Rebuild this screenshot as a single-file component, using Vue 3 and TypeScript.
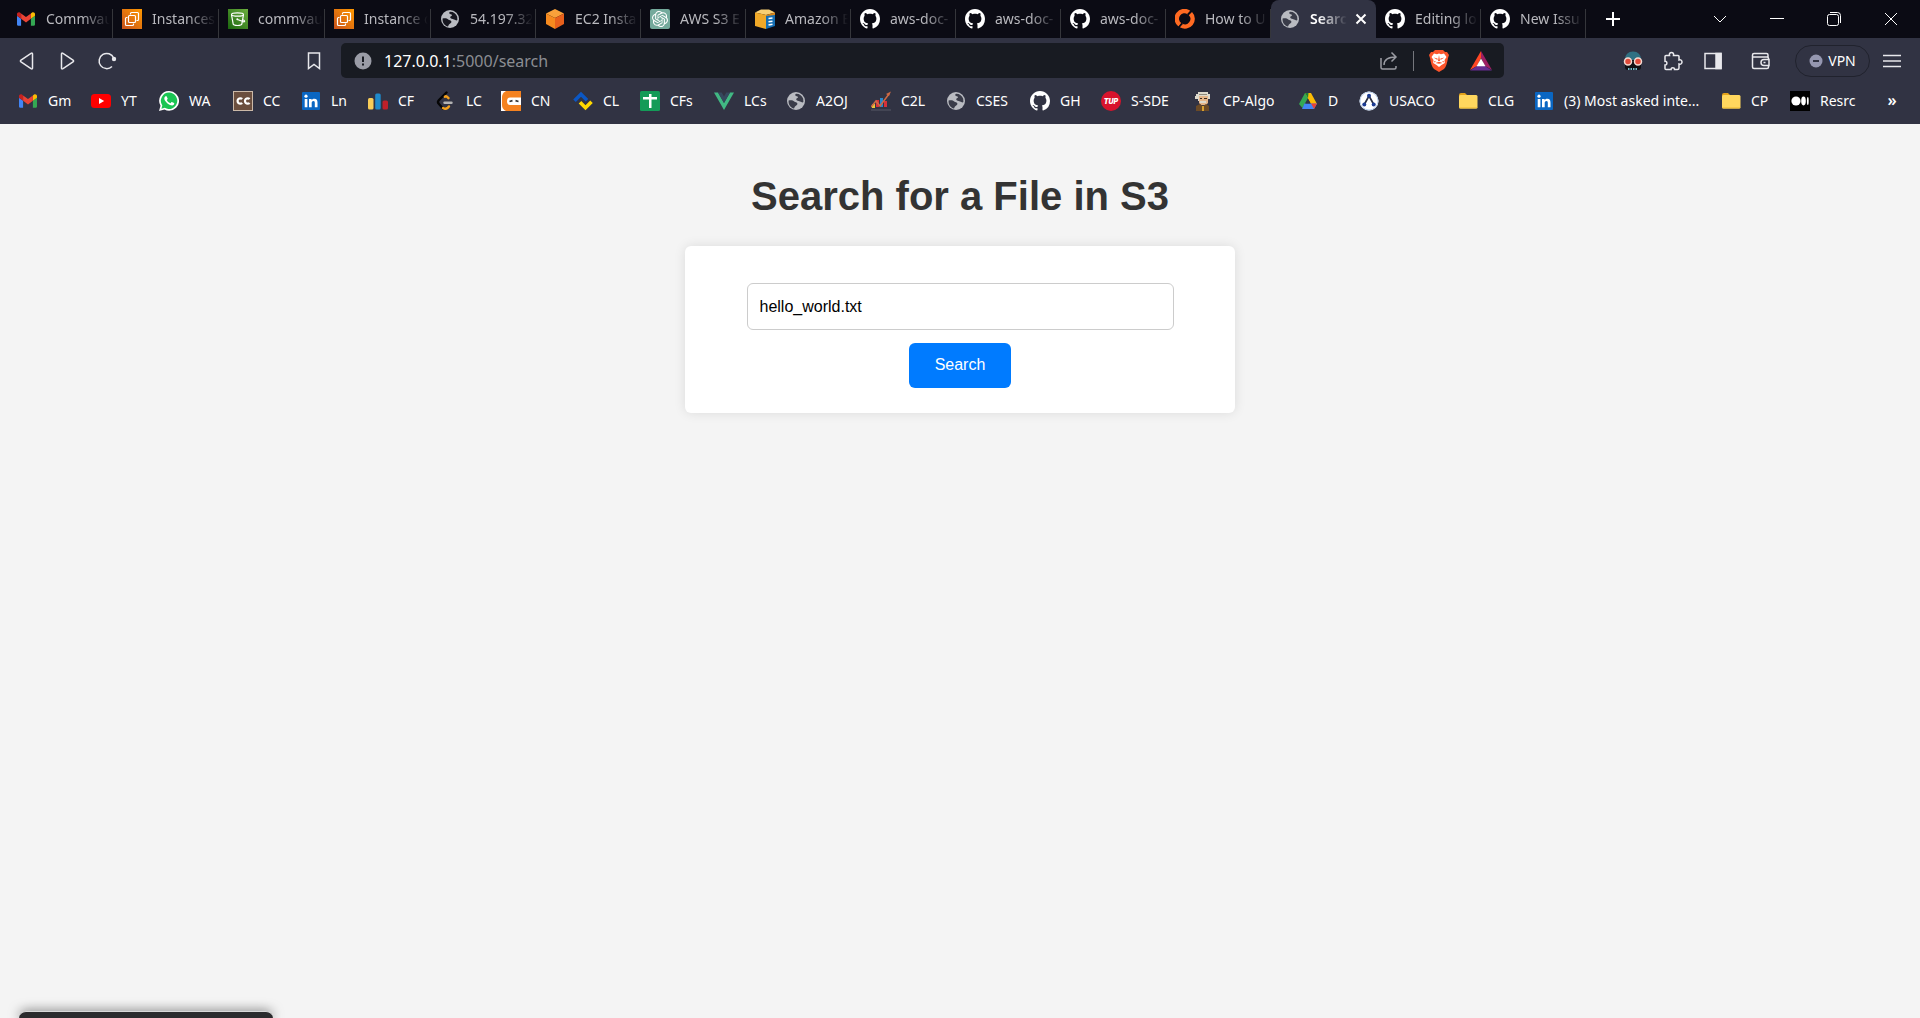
<script setup lang="ts">
import { ref } from 'vue'

interface Tab {
  title: string
  icon: string
  active?: boolean
}

interface Bookmark {
  label: string
  icon: string
  width: number
}

const fileName = ref('hello_world.txt')

const octocat =
  '<path fill="#fff" transform="scale(1.25)" d="M8 0C3.58 0 0 3.58 0 8c0 3.54 2.29 6.53 5.47 7.59.4.07.55-.17.55-.38 0-.19-.01-.82-.01-1.49-2.01.37-2.53-.49-2.69-.94-.09-.23-.48-.94-.82-1.13-.28-.15-.68-.52-.01-.53.63-.01 1.08.58 1.23.82.72 1.21 1.87.87 2.33.66.07-.52.28-.87.51-1.07-1.78-.2-3.64-.89-3.64-3.95 0-.87.31-1.59.82-2.15-.08-.2-.36-1.02.08-2.12 0 0 .67-.21 2.2.82.64-.18 1.32-.27 2-.27.68 0 1.36.09 2 .27 1.53-1.04 2.2-.82 2.2-.82.44 1.1.16 1.92.08 2.12.51.56.82 1.27.82 2.15 0 3.07-1.87 3.75-3.65 3.95.29.25.54.73.54 1.48 0 1.07-.01 1.93-.01 2.2 0 .21.15.46.55.38A8.013 8.013 0 0016 8c0-4.42-3.58-8-8-8z"/>'

const globe =
  '<circle cx="10" cy="10" r="9" fill="#b9bbc1"/><path class="sea" d="M2.600 9.500C5 8.800 7.200 9.400 8.200 10.400 9.200 11.400 11 11 11.400 12.400 11.800 14 9.600 14.400 8.800 15.800L8 17.600C4.600 16.800 2.200 13.600 2.600 9.500ZM10.400 2.800C13.600 2.800 16.200 4.800 17.200 7.800L17.400 11C16.200 12 15.400 10.800 14 10.400 12.400 10 10.600 10 10.200 8.600 9.800 7.400 12.200 7.200 12 6 11.800 5 9.400 5.200 9.200 4.200 9.100 3.400 9.800 2.800 10.400 2.800Z"/>'

const folder =
  '<path fill="#e3a21a" d="M1 4a2 2 0 0 1 2-2h4l2 2h8a2 2 0 0 1 2 2v3H1z"/><rect x="1" y="4" width="18.500" height="13.500" rx="1.500" fill="#ffd75e"/><path fill="#f6c744" d="M1 16h18.500a1.500 1.500 0 0 1-1.500 1.500H2.500A1.500 1.500 0 0 1 1 16z"/>'

const linkedin =
  '<rect x="1" y="1" width="18" height="18" rx="1" fill="#0a66c2"/><path fill="#fff" d="M3.700 8h2.700v8.300H3.700zM8 8h2.600v1.200c.5-.8 1.400-1.400 2.700-1.400 2.500 0 3.200 1.600 3.200 3.900v4.600h-2.700v-4.200c0-1.100-.2-2-1.400-2-1.300 0-1.700 1-1.700 2.100v4.100H8z"/><circle cx="5" cy="5.200" r="1.600" fill="#fff"/>'

const ec2 =
  '<defs><linearGradient id="ec2g" x1="0" y1="1" x2="1" y2="0"><stop offset="0" stop-color="#c8511b"/><stop offset="1" stop-color="#f90"/></linearGradient></defs><rect width="20" height="20" fill="url(#ec2g)"/><g fill="none" stroke="#fff" stroke-width="1.200"><path d="M8.500 5.500V4.500q0-1 1-1h6q1 0 1 1v6q0 1-1 1h-1"/><rect x="6.500" y="6.500" width="7" height="7" rx="1"/><path d="M5.500 8.500h-1q-1 0-1 1v6q0 1 1 1h6q1 0 1-1v-1"/></g>'

const icons: Record<string, string> = {
  github: octocat,
  globe,
  folder,
  linkedin,
  ec2,
  gmail:
    '<g transform="translate(1 3.200) scale(.2045) translate(-52 -42)"><path fill="#4285f4" d="M58 108h14V74L52 59v43c0 3.320 2.690 6 6 6"/><path fill="#34a853" d="M120 108h14c3.320 0 6-2.690 6-6V59l-20 15"/><path fill="#fbbc04" d="M120 48v26l20-15v-8c0-7.420-8.470-11.650-14.400-7.200"/><path fill="#ea4335" d="M72 74V48l24 18 24-18v26L96 92"/><path fill="#c5221f" d="M52 51v8l20 15V48l-5.600-4.200c-5.940-4.450-14.400-.22-14.400 7.200"/></g>',
  s3:
    '<defs><linearGradient id="s3g" x1="0" y1="1" x2="1" y2="0"><stop offset="0" stop-color="#1b660f"/><stop offset="1" stop-color="#6cae3e"/></linearGradient></defs><rect width="20" height="20" fill="url(#s3g)"/><g fill="none" stroke="#fff" stroke-width="1.200"><ellipse cx="9.500" cy="5.500" rx="6" ry="1.700"/><path d="M3.500 5.700l1.700 9.500c.3 1.700 8.300 1.700 8.600 0l1.700-9.500M9.500 10.500l6 2.300c1.500.4 1.500-1 .1-1.900l-1-.7"/></g><circle cx="9.300" cy="10.300" r="1" fill="#fff"/>',
  cube:
    '<path fill="#f9a13a" d="M10 0l9 4.500L10 9 1 4.500z"/><path fill="#f68a1f" d="M1 4.500L10 9v11l-9-5z"/><path fill="#e8601c" d="M19 4.500L10 9v11l9-5z"/>',
  openai:
    '<rect width="20" height="20" rx="2" fill="#74aa9c"/><path fill="#fff" transform="translate(2 2) scale(.667)" d="M22.282 9.821a5.985 5.985 0 0 0-.516-4.911 6.046 6.046 0 0 0-6.510-2.900A6.065 6.065 0 0 0 4.981 4.182a5.985 5.985 0 0 0-3.998 2.900 6.046 6.046 0 0 0 .743 7.097 5.980 5.980 0 0 0 .511 4.911 6.051 6.051 0 0 0 6.515 2.900A5.985 5.985 0 0 0 13.260 24a6.056 6.056 0 0 0 5.772-4.206 5.989 5.989 0 0 0 3.998-2.900 6.056 6.056 0 0 0-.748-7.073zm-9.022 12.608a4.476 4.476 0 0 1-2.876-1.041l.142-.080 4.778-2.758a.795.795 0 0 0 .393-.681v-6.737l2.020 1.169a.071.071 0 0 1 .038.052v5.583a4.504 4.504 0 0 1-4.495 4.494zm-9.661-4.125a4.471 4.471 0 0 1-.535-3.014l.142.085 4.783 2.758a.771.771 0 0 0 .781 0l5.843-3.369v2.332a.080.080 0 0 1-.033.062L9.740 19.950a4.499 4.499 0 0 1-6.141-1.646zM2.341 7.896a4.485 4.485 0 0 1 2.366-1.973V11.600a.766.766 0 0 0 .388.677l5.814 3.354-2.020 1.169a.076.076 0 0 1-.071 0l-4.830-2.787A4.504 4.504 0 0 1 2.341 7.872zm16.596 3.856L13.104 8.364 15.119 7.200a.076.076 0 0 1 .071 0l4.830 2.791a4.494 4.494 0 0 1-.677 8.104v-5.677a.790.790 0 0 0-.407-.667zm2.011-3.023l-.142-.085-4.774-2.782a.776.776 0 0 0-.785 0L9.409 9.230V6.897a.066.066 0 0 1 .028-.062l4.830-2.787a4.499 4.499 0 0 1 6.680 4.660zM8.307 12.863l-2.020-1.164a.080.080 0 0 1-.038-.057V6.074a4.499 4.499 0 0 1 7.376-3.454l-.142.081L8.704 5.459a.795.795 0 0 0-.393.681zm1.098-2.365l2.602-1.500 2.607 1.500v2.999l-2.597 1.500-2.607-1.500Z"/>',
  awsbox:
    '<path fill="#f9cf73" d="M0 3.500L6 .5h8l6 3-9 2.500z"/><path fill="#f0a828" d="M0 3.500L11 6v14L0 17z"/><path fill="#d9861a" d="M11 6l9-2.500v5H11z"/><path fill="#146eb4" d="M11 7l9-1v11l-9 3z"/><path stroke="#fff" stroke-width="1.600" d="M13.500 9.500l4-.5M13.500 12.700l4-.5M13.500 16l4-.8"/>',
  ring:
    '<path fill="none" stroke="#ff6a22" stroke-width="4.500" d="M4.800 15.800A7.600 7.600 0 0 1 14 3.600M15.400 4.600A7.600 7.600 0 0 1 6 16.400"/><path stroke="#0b0b14" stroke-width="1.300" d="M12.500 5.500l4-4M3.500 18.500l4-4"/>',
  youtube:
    '<rect y="3" width="20" height="14" rx="3.500" fill="#f00"/><path fill="#fff" d="M8 7l5.200 3L8 13z"/>',
  whatsapp:
    '<path fill="#fff" d="M10.200 0a9.800 9.800 0 0 1 0 19.700c-1.700 0-3.300-.4-4.700-1.200L0 20l1.500-5.300A9.800 9.800 0 0 1 10.200 0z"/><path fill="#1bc553" d="M10.200 1.600a8.200 8.200 0 1 1-4.400 15.200l-3.400.9.900-3.300A8.200 8.200 0 0 1 10.200 1.600z"/><path fill="#fff" transform="translate(.4 0) scale(.82)" d="M17.472 14.382c-.297-.149-1.758-.867-2.030-.967-.273-.099-.471-.148-.670.150-.197.297-.767.966-.940 1.164-.173.199-.347.223-.644.075-.297-.150-1.255-.463-2.390-1.475-.883-.788-1.480-1.761-1.653-2.059-.173-.297-.018-.458.130-.606.134-.133.298-.347.446-.520.149-.174.198-.298.298-.497.099-.198.050-.371-.025-.520-.075-.149-.669-1.612-.916-2.207-.242-.579-.487-.500-.669-.510-.173-.008-.371-.010-.570-.010-.198 0-.520.074-.792.372-.272.297-1.040 1.016-1.040 2.479 0 1.462 1.065 2.875 1.213 3.074.149.198 2.096 3.200 5.077 4.487.709.306 1.262.489 1.694.625.712.227 1.360.195 1.871.118.571-.085 1.758-.719 2.006-1.413.248-.694.248-1.289.173-1.413-.074-.124-.272-.198-.570-.347z"/>',
  codechef:
    '<rect x=".5" y=".5" width="19" height="19" fill="#6b4f3f" stroke="#cbb9a8"/><path fill="none" stroke="#fff" stroke-width="2.200" d="M9.200 8.100A2.700 2.700 0 1 0 9.200 11.900M16.600 8.100A2.700 2.700 0 1 0 16.600 11.900"/>',
  codeforces:
    '<rect y="7" width="5.500" height="11.500" rx="1.500" fill="#f8cd58"/><rect x="7.200" y="2.500" width="5.500" height="16" rx="1.500" fill="#1f8acb"/><rect x="14.500" y="9.500" width="5.500" height="9" rx="1.500" fill="#c0202a"/>',
  leetcode:
    '<g fill="none" stroke-linecap="round" stroke-width="2.400"><path stroke="#050505" d="M10.500 1.500L3 9q-2 2 0 4l4 4.500"/><path stroke="#f5a11c" d="M12.500 7.200l-1.600-1.500q-1-.8-2 0M7 17q2.500 1.500 4.500 0l1.500-1.600"/><path stroke="#b3b3b3" d="M8.500 11.700h7"/></g>',
  codingninjas:
    '<rect width="20" height="20" fill="#fff"/><path fill="#f58220" d="M5 0h15v20H5Q1 18 1 14V6Q1 2 5 0z"/><path fill="#fff" d="M20 6.500V14H9q-3 0-3-3.700t3-3.800z"/><path stroke="#333" stroke-width="1.800" d="M8.500 10.500l3-.8M17.500 10.500l-3-.8"/>',
  codolio:
    '<path fill="none" stroke="#0b57c4" stroke-width="3.600" d="M1.500 9.800L8 3.200l6 6"/><path fill="none" stroke="#ffd800" stroke-width="3.600" d="M7 11.200l5.500 5.600 6-6"/>',
  sheets:
    '<rect width="20" height="20" rx="1.500" fill="#149b58"/><path fill="#fff" d="M3 6h6V3h2.500v3H17v2.500h-5.500V17H9V8.500H3z"/>',
  vue:
    '<path fill="#41b883" d="M0 1.500h4l6 10.500 6-10.500h4L10 19z"/><path fill="#35495e" d="M4 1.500h3.700L10 5.500l2.300-4H16L10 12z"/>',
  chart:
    '<path fill="#e8c53a" d="M1 13h3v4H1z"/><path fill="#2a86c9" d="M9 7h3v9H9z"/><path fill="#d7303a" d="M5 9h3v7H5zM13 10h3v6h-3z"/><path fill="none" stroke="#cf6a45" stroke-width="1.500" d="M0 16l5-6 4 5 9-12"/><path fill="#cf6a45" d="M20 .5l-5 2.500 3 2z"/><path stroke="#565866" d="M0 19h20"/>',
  tup:
    '<circle cx="10" cy="10" r="10" fill="#d8132c"/><text x="10" y="12.500" fill="#fff" text-anchor="middle" font-family="Inter, sans-serif" font-weight="900" font-style="italic" font-size="7">TUP</text>',
  algo:
    '<path fill="#ddd9cc" d="M3 3h2V1h10v2h2v5h-2v2H5V8H2V5h1z"/><path fill="#8f8a7c" d="M6 3h8v1H6z"/><path fill="#e5b68a" d="M6 5h9v7l-2 2H8l-2-2z"/><path fill="#3b2a1e" d="M7 7h2v1H7zM11 7h3v1h-3z"/><path fill="#ddd9cc" d="M7 10h6v2H7z"/><path fill="#6b4a26" d="M3 15l4-2 3 2 3-2 3 2v5H3z"/><path fill="#d8a02f" d="M9 15h2v5H9z"/>',
  drive:
    '<path fill="#34a853" d="M7 2L1 13l3.500 4L10 7z"/><path fill="#fbbc04" d="M7 2h6l6 11h-6z"/><path fill="#4285f4" d="M6.500 12.500H19L16 18H4z"/><path fill="#188038" d="M7 2h3.500L10 7z"/><path fill="#ea4335" d="M13 12.500h6L16 18z"/><path fill="#313343" d="M10 8l2.500 4.500h-5z"/>',
  usaco:
    '<circle cx="10" cy="10" r="9.500" fill="#fff"/><circle cx="10" cy="10" r="9" fill="none" stroke="#b9cdea"/><path fill="none" stroke="#2a2f45" stroke-width="1.700" d="M10 5L5.500 13M10 5l4.500 8"/><g fill="#1b3b94"><circle cx="10" cy="4.800" r="2"/><circle cx="5.300" cy="13.500" r="2"/><circle cx="14.700" cy="13.500" r="2"/></g>',
  medium:
    '<rect width="20" height="20" fill="#000"/><circle cx="6" cy="10" r="4.600" fill="#fff"/><ellipse cx="13.500" cy="10" rx="2.300" ry="4.400" fill="#fff"/><ellipse cx="17.800" cy="10" rx=".9" ry="4" fill="#fff"/>',
}

const tabs: Tab[] = [
  { title: 'Commvau', icon: 'gmail' },
  { title: 'Instances', icon: 'ec2' },
  { title: 'commvau', icon: 's3' },
  { title: 'Instance d', icon: 'ec2' },
  { title: '54.197.32', icon: 'globe' },
  { title: 'EC2 Insta', icon: 'cube' },
  { title: 'AWS S3 E', icon: 'openai' },
  { title: 'Amazon E', icon: 'awsbox' },
  { title: 'aws-doc-', icon: 'github' },
  { title: 'aws-doc-', icon: 'github' },
  { title: 'aws-doc-', icon: 'github' },
  { title: 'How to U', icon: 'ring' },
  { title: 'Searc', icon: 'globe', active: true },
  { title: 'Editing lo', icon: 'github' },
  { title: 'New Issu', icon: 'github' },
]

const bookmarks: Bookmark[] = [
  { label: 'Gm', icon: 'gmail', width: 73 },
  { label: 'YT', icon: 'youtube', width: 68 },
  { label: 'WA', icon: 'whatsapp', width: 74 },
  { label: 'CC', icon: 'codechef', width: 68 },
  { label: 'Ln', icon: 'linkedin', width: 67 },
  { label: 'CF', icon: 'codeforces', width: 68 },
  { label: 'LC', icon: 'leetcode', width: 65 },
  { label: 'CN', icon: 'codingninjas', width: 72 },
  { label: 'CL', icon: 'codolio', width: 67 },
  { label: 'CFs', icon: 'sheets', width: 74 },
  { label: 'LCs', icon: 'vue', width: 72 },
  { label: 'A2OJ', icon: 'globe', width: 85 },
  { label: 'C2L', icon: 'chart', width: 75 },
  { label: 'CSES', icon: 'globe', width: 84 },
  { label: 'GH', icon: 'github', width: 71 },
  { label: 'S-SDE', icon: 'tup', width: 92 },
  { label: 'CP-Algo', icon: 'algo', width: 105 },
  { label: 'D', icon: 'drive', width: 61 },
  { label: 'USACO', icon: 'usaco', width: 99 },
  { label: 'CLG', icon: 'folder', width: 76 },
  { label: '(3) Most asked inte...', icon: 'linkedin', width: 187 },
  { label: 'CP', icon: 'folder', width: 69 },
  { label: 'Resrc', icon: 'medium', width: 86 },
]
</script>

<template>
  <div class="window">
    <header class="chrome">
      <div class="tab-strip">
        <div class="tabs">
          <div v-for="(tab, i) in tabs" :key="i" class="tab" :class="{ active: tab.active }">
            <svg class="icon" viewBox="0 0 20 20" aria-hidden="true" v-html="icons[tab.icon]"></svg>
            <span class="tab-title">{{ tab.title }}</span>
            <button v-if="tab.active" class="tab-close" aria-label="Close tab">
              <svg width="12" height="12" viewBox="0 0 12 12"><path d="M1.500 1.500l9 9m0-9l-9 9" stroke="#fff" stroke-width="2" /></svg>
            </button>
          </div>
        </div>
        <button class="new-tab" aria-label="New tab">
          <svg width="16" height="16" viewBox="0 0 16 16"><path d="M8 1v14M1 8h14" stroke="#fff" stroke-width="2" /></svg>
        </button>
        <div class="window-controls">
          <button aria-label="Search tabs">
            <svg width="14" height="14" viewBox="0 0 14 14"><path d="M1 4l6 6 6-6" /></svg>
          </button>
          <button aria-label="Minimise">
            <svg width="14" height="14" viewBox="0 0 14 14"><path d="M0 6.500h14" /></svg>
          </button>
          <button aria-label="Restore">
            <svg width="14" height="14" viewBox="0 0 14 14"><rect x=".5" y="2.500" width="11" height="11" rx="2" /><path d="M3 .5h7.500a3 3 0 0 1 3 3V11" /></svg>
          </button>
          <button aria-label="Close">
            <svg width="14" height="14" viewBox="0 0 14 14"><path d="M1 1l12 12M13 1L1 13" /></svg>
          </button>
        </div>
      </div>

      <div class="toolbar">
        <div class="nav">
          <button aria-label="Back">
            <svg width="20" height="20" viewBox="0 0 20 20"><path d="M15.500 3v14q0 1.500-1.500.6L4 11q-1.200-1 0-2l10-6.600q1.500-.9 1.500.6z" /></svg>
          </button>
          <button aria-label="Forward">
            <svg width="20" height="20" viewBox="0 0 20 20"><path d="M4.500 3v14q0 1.500 1.500.6L16 11q1.200-1 0-2L6 2.400q-1.500-.9-1.500.6z" /></svg>
          </button>
          <button aria-label="Reload">
            <svg width="20" height="20" viewBox="0 0 20 20"><path d="M15 15.500A7.600 7.600 0 1 1 16.700 7" /><circle cx="17" cy="8" r="2.200" fill="#e8e8ec" stroke="none" /></svg>
          </button>
          <button class="save-page" aria-label="Bookmark this page">
            <svg width="20" height="20" viewBox="0 0 20 20"><path d="M4.500 2h11v15.500l-5.500-4-5.500 4z" /></svg>
          </button>
        </div>

        <div class="omnibox">
          <svg class="info" width="18" height="18" viewBox="0 0 18 18"><circle cx="9" cy="9" r="8.500" fill="#9a9ca6" /><path d="M9 4.500v5.500M9 11.500v2" stroke="#181b22" stroke-width="2" /></svg>
          <span class="url"><span class="host">127.0.0.1</span>:5000/search</span>
          <button class="share" aria-label="Share">
            <svg width="20" height="20" viewBox="0 0 20 20"><path d="M2 7v9.500a1.500 1.500 0 0 0 1.500 1.500h12a1.500 1.500 0 0 0 1.500-1.500V15M5 14c0-5 4-8 12-8M12.500 1.500L17 6l-4.500 4.500" /></svg>
          </button>
          <span class="divider"></span>
          <button aria-label="Brave Shields">
            <svg width="22" height="24" viewBox="0 0 22 24"><path fill="#fb542b" d="M7 1h8l2 2h2l2 3-1 3c-.8 5-2 9-4 11l-5 3-5-3c-2-2-3.200-6-4-11L1 6l2-3h2z" /><path fill="#fff" d="M6 4.500l3 .7 2-.6 2 .6 3-.7 2.500 3.500-2 3 .3 3-3.300 2-2.500 2-2.500-2-3.300-2 .3-3-2-3z" /><path fill="#fb542b" d="M5.500 8.500l4 1v1.500zM16.500 8.500l-4 1v1.500zM11 6l1 6h-2zM7.500 14l3.500-1.200 3.500 1.200-3.500.8zM6 12l2 .5-1.500 1zM16 12l-2 .5 1.500 1z" /></svg>
          </button>
          <button aria-label="Brave Rewards">
            <svg width="24" height="20" viewBox="0 0 24 20"><path fill="#ff4724" d="M12 0L1 19l7-4 4-8z" /><path fill="#9e1f63" d="M12 0l11 19-7-4-4-8z" /><path fill="#662d91" d="M1 19.500h22L16 15H8z" /><path fill="#fff" d="M12 7.500l4.500 7.700h-9z" /></svg>
          </button>
        </div>

        <div class="actions">
          <button aria-label="Goggles extension">
            <svg class="solid" width="20" height="20" viewBox="0 0 20 20"><path fill="#2f7183" d="M1.500 9Q2.500 .5 10 .5T18.500 9z" /><path fill="#101114" d="M2 9h16v7q0 3-3 3H5q-3 0-3-3z" /><path stroke="#75bccb" stroke-width="2" stroke-dasharray="1.500 1" d="M5 18h10" /><circle cx="5" cy="10.500" r="3.500" fill="#e04a3a" stroke="#f4d9d0" stroke-width="1.500" /><circle cx="15" cy="10.500" r="3.500" fill="#e04a3a" stroke="#f4d9d0" stroke-width="1.500" /></svg>
          </button>
          <button aria-label="Extensions">
            <svg width="20" height="20" viewBox="0 0 20 20"><path d="M3 4.500h3.500C6 2.500 7 1.500 8.500 1.500S11 2.500 10.500 4.500H15q1 0 1 1V9c2-.5 3 .5 3 2s-1 2.500-3 2v4q0 1.500-1.500 1.500h-3c.3-2.500-3.700-2.500-3.400 0H3q-1 0-1-1v-3.500c2.500.3 2.500-4 0-3.700V5.500q0-1 1-1z" /></svg>
          </button>
          <button aria-label="Sidebar">
            <svg width="20" height="20" viewBox="0 0 20 20"><rect x="2" y="2.500" width="16" height="15" /><path fill="#e8e8ec" d="M13 2.500h5v15h-5z" /></svg>
          </button>
          <button class="wallet" aria-label="Wallet">
            <svg width="20" height="20" viewBox="0 0 20 20"><path d="M17 7V4q0-1.500-1.500-1.500H3q-1.500 0-1.500 1.500v12q0 1.500 1.500 1.500h13q1.500 0 1.500-1.500v-1M1.500 6H16q1.500 0 1.500 1.500V8M18 8.500h-5a3 3 0 0 0 0 6h5zM12.500 11.500h2" /></svg>
          </button>
          <button class="vpn">
            <svg width="14" height="14" viewBox="0 0 14 14"><circle cx="7" cy="7" r="6.500" fill="#9597b0" stroke="none" /><path d="M4 7h6" stroke="#313343" stroke-width="2" /></svg>
            VPN
          </button>
          <button class="menu" aria-label="Menu">
            <svg width="18" height="16" viewBox="0 0 18 16"><path d="M0 2.500h18M0 8h18M0 13.500h18" /></svg>
          </button>
        </div>
      </div>

      <nav class="bookmarks">
        <a v-for="mark in bookmarks" :key="mark.label" class="bookmark" href="#" :style="{ width: mark.width + 'px' }">
          <svg class="icon" viewBox="0 0 20 20" aria-hidden="true" v-html="icons[mark.icon]"></svg>
          <span>{{ mark.label }}</span>
        </a>
        <button class="more" aria-label="More bookmarks">»</button>
      </nav>
    </header>

    <main class="page">
      <h1>Search for a File in S3</h1>
      <form class="card" @submit.prevent>
        <input v-model="fileName" type="text" aria-label="File name" />
        <button type="submit">Search</button>
      </form>
    </main>

    <div class="popup"></div>
  </div>
</template>

<style>
body {
  margin: 0;
  background: #f4f4f4;
}
</style>

<style scoped>
.window {
  min-height: 100vh;
  background: #f4f4f4;
}

button {
  padding: 0;
  border: 0;
  background: none;
  font: inherit;
  color: inherit;
}

svg {
  display: block;
  flex: none;
}

.chrome {
  background: #313343;
  color: #fff;
  font: 14px/20px 'Noto Sans', 'Open Sans', sans-serif;
}

.icon {
  width: 20px;
  height: 20px;
}

.icon :deep(.sea) {
  fill: #3a3c49;
}

/* Tabs */
.tab-strip {
  display: flex;
  height: 38px;
  background: #0b0b14;
}

.tabs {
  display: flex;
  padding-left: 7px;
}

.tab {
  display: flex;
  align-items: center;
  box-sizing: border-box;
  width: 105px;
  padding: 0 3px 0 9px;
  background: linear-gradient(#35363b, #35363b) right bottom / 1px 29px no-repeat;
}

.tab:nth-child(-n + 4) {
  width: 106px;
}

.tab-title {
  flex: 1;
  min-width: 0;
  margin-left: 10px;
  overflow: hidden;
  white-space: nowrap;
  color: #b9b9be;
  mask-image: linear-gradient(to right, #000 calc(100% - 28px), transparent);
}

.tab .icon :deep(.sea) {
  fill: #16161f;
}

.tab.active {
  border-radius: 8px 8px 0 0;
  background: #313343;
}

.tab.active .icon :deep(.sea) {
  fill: #3a3c49;
}

.active .tab-title {
  color: #fff;
  font-weight: 600;
}

.tab-close {
  margin: 0 6px 0 8px;
}

.new-tab {
  display: grid;
  place-items: center;
  width: 54px;
}

.window-controls {
  display: flex;
  margin-left: auto;
  padding-right: 1px;
}

.window-controls button {
  display: grid;
  place-items: center;
  width: 57px;
}

.window-controls svg {
  fill: none;
  stroke: #fff;
}

/* Toolbar */
.toolbar {
  display: flex;
  align-items: center;
  height: 45px;
}

.nav {
  display: flex;
  width: 327px;
  padding: 0 7px;
}

.nav button,
.actions button {
  display: grid;
  place-items: center;
  width: 40px;
  height: 32px;
}

.nav .save-page {
  margin-left: auto;
}

.nav svg,
.actions svg,
.share svg {
  fill: none;
  stroke: #e8e8ec;
  stroke-width: 1.5;
}

.actions svg.solid {
  stroke: none;
}

.omnibox {
  display: flex;
  flex: 1;
  align-items: center;
  height: 35px;
  border-radius: 5px;
  background: #181b22;
}

.info {
  margin-left: 13px;
}

.url {
  flex: 1;
  margin-left: 12px;
  color: #8b8d92;
  font-size: 16px;
}

.host {
  color: #fff;
}

.omnibox button {
  display: grid;
  place-items: center;
  width: 42px;
}

.omnibox .share {
  width: 40px;
}

.omnibox .share svg {
  stroke: #9a9ca3;
}

.omnibox button:last-child {
  margin-right: 2px;
}

.divider {
  width: 1px;
  height: 20px;
  margin: 0 4px;
  background: #75777d;
}

.actions {
  display: flex;
  justify-content: flex-end;
  width: 408px;
  padding-right: 8px;
}

.actions .wallet {
  margin-left: 8px;
}

.actions .vpn {
  display: flex;
  align-items: center;
  justify-content: center;
  gap: 5px;
  box-sizing: border-box;
  width: 75px;
  margin: 0 2px 0 14px;
  border: 1px solid #20222d;
  border-radius: 16px;
}

/* Bookmarks */
.bookmarks {
  display: flex;
  align-items: center;
  height: 36px;
  padding: 0 0 5px 18px;
}

.bookmark {
  display: flex;
  align-items: center;
  gap: 10px;
  white-space: nowrap;
  color: #fff;
  text-decoration: none;
}

.more {
  width: 32px;
  padding-bottom: 2px;
  font-size: 16px;
  font-weight: 600;
}

/* Page */
.page {
  display: flex;
  flex-direction: column;
  align-items: center;
  padding-top: 49px;
  font-family: 'Liberation Sans', Arial, sans-serif;
}

h1 {
  margin: 0 0 27px;
  color: #333;
  font-size: 40px;
  line-height: 46px;
}

.card {
  display: flex;
  flex-direction: column;
  align-items: center;
  gap: 13px;
  box-sizing: border-box;
  width: 550px;
  max-width: 100%;
  padding: 37px 25px 25px;
  border-radius: 6px;
  background: #fff;
  box-shadow: 0 0 12px rgba(0, 0, 0, 0.1);
}

.card input {
  box-sizing: border-box;
  width: 427px;
  max-width: 100%;
  height: 47px;
  padding: 0 12px;
  border: 1px solid #ccc;
  border-radius: 6px;
  color: #000;
  font: 16px/20px 'Liberation Sans', Arial, sans-serif;
}

.card button {
  height: 45px;
  padding: 0 26px 2px;
  border-radius: 6px;
  background: #007bff;
  color: #fff;
  font-size: 16px;
}

.popup {
  position: fixed;
  bottom: 0;
  left: 19px;
  box-sizing: border-box;
  width: 254px;
  height: 7px;
  border-top: 1px solid #d8d8d8;
  border-radius: 8px 8px 0 0;
  background: #2b2b2d;
  box-shadow: 0 0 12px rgba(0, 0, 0, 0.6);
}
</style>
